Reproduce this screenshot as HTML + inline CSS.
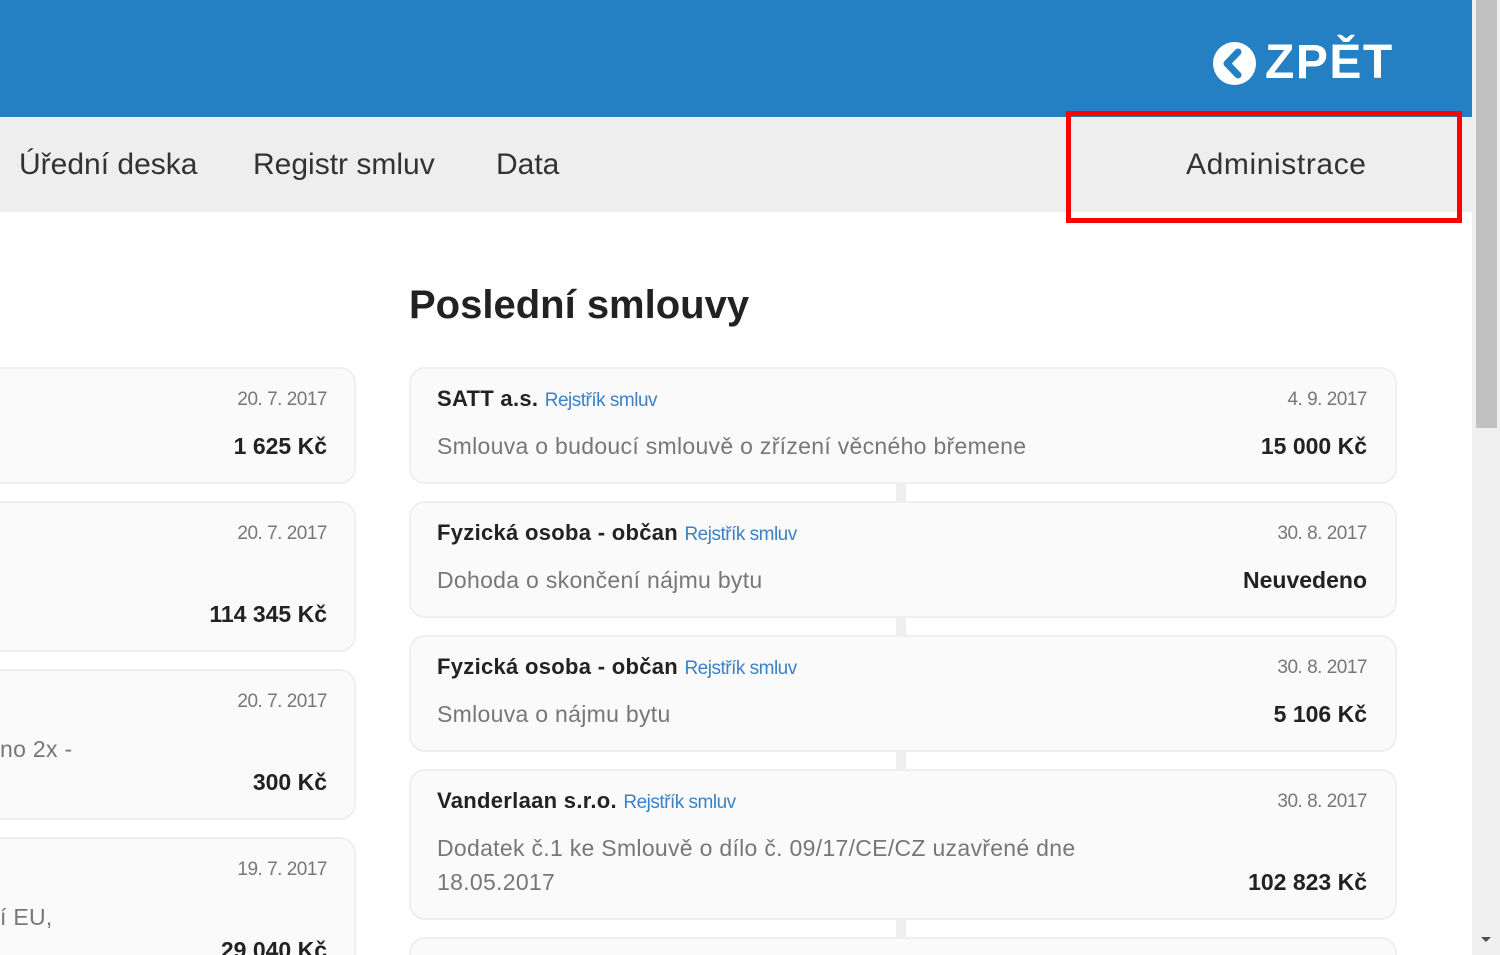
<!DOCTYPE html>
<html style="width:1500px;height:955px;overflow:hidden"><head><meta charset="utf-8"><style>
*{margin:0;padding:0;box-sizing:border-box}
body{width:1500px;height:955px;overflow:hidden;background:#fff;font-family:"Liberation Sans",sans-serif;position:relative}
.a{position:absolute;white-space:nowrap}
.card{position:absolute;background:#fafafa;border:2px solid #efefef;border-radius:16px}
.conn{position:absolute;left:896px;width:10px;background:#eeeeee}
.t{font-size:22px;color:#222;font-weight:bold;letter-spacing:0.3px}
.l{font-size:19px;color:#3a82c8;font-weight:normal;letter-spacing:-0.5px}
.d{font-size:23px;color:#777;letter-spacing:0.3px}
.dt{font-size:19px;color:#777;letter-spacing:-0.5px}
.m{font-size:23px;color:#222;font-weight:bold}
.r{text-align:right}
.n{font-size:30px;color:#333}
</style></head><body>
<div class="a" style="left:0;top:0;width:1472px;height:117px;background:#2580c3"></div>
<svg class="a" style="left:1212px;top:41px" width="45" height="45" viewBox="0 0 45 45"><circle cx="22.5" cy="22.5" r="21.5" fill="#fff"/><path d="M26 11 L15 22.5 L26 34" stroke="#2580c3" stroke-width="7" fill="none" stroke-linecap="round" stroke-linejoin="round"/></svg>
<div class="a" style="left:1265px;top:35px;font-size:48px;font-weight:bold;color:#fff;letter-spacing:1.5px">ZPĚT</div>
<div class="a" style="left:0;top:117px;width:1472px;height:95px;background:#eeeeee"></div>
<div class="a n" style="left:19px;top:148px">Úřední deska</div>
<div class="a n" style="left:253px;top:148px">Registr smluv</div>
<div class="a n" style="left:496px;top:148px">Data</div>
<div class="a n" style="left:1186px;top:148px;letter-spacing:0.6px">Administrace</div>
<div class="a" style="left:1066px;top:111px;width:396px;height:112px;border:5px solid #f00"></div>
<div class="a" style="left:1472px;top:0;width:28px;height:955px;background:#f0f0f0"></div>
<div class="a" style="left:1476px;top:0;width:21px;height:428px;background:#c1c1c1"></div>
<div class="a" style="left:1481px;top:937px;width:0;height:0;border-left:5px solid transparent;border-right:5px solid transparent;border-top:5px solid #505050"></div>

<div class="a" style="left:409px;top:283px;font-size:40px;font-weight:bold;color:#222">Poslední smlouvy</div>

<!-- left column -->
<div class="card" style="left:-20px;top:367px;width:376px;height:117px"></div>
<div class="a dt r" style="left:100px;width:227px;top:389px">20. 7. 2017</div>
<div class="a m r" style="left:100px;width:227px;top:433px">1 625 Kč</div>
<div class="card" style="left:-20px;top:501px;width:376px;height:151px"></div>
<div class="a dt r" style="left:100px;width:227px;top:523px">20. 7. 2017</div>
<div class="a m r" style="left:100px;width:227px;top:601px">114 345 Kč</div>
<div class="card" style="left:-20px;top:669px;width:376px;height:151px"></div>
<div class="a dt r" style="left:100px;width:227px;top:691px">20. 7. 2017</div>
<div class="a d" style="left:0;top:736px">no 2x -</div>
<div class="a m r" style="left:100px;width:227px;top:769px">300 Kč</div>
<div class="card" style="left:-20px;top:837px;width:376px;height:151px"></div>
<div class="a dt r" style="left:100px;width:227px;top:859px">19. 7. 2017</div>
<div class="a d" style="left:0;top:904px">í EU,</div>
<div class="a m r" style="left:100px;width:227px;top:937px">29 040 Kč</div>

<!-- right column -->
<div class="conn" style="top:480px;height:25px"></div>
<div class="conn" style="top:614px;height:25px"></div>
<div class="conn" style="top:748px;height:25px"></div>
<div class="conn" style="top:916px;height:25px"></div>

<div class="card" style="left:409px;top:367px;width:988px;height:117px"></div>
<div class="a t" style="left:437px;top:386px">SATT a.s. <span class="l">Rejstřík smluv</span></div>
<div class="a dt r" style="left:1100px;width:267px;top:389px">4. 9. 2017</div>
<div class="a d" style="left:437px;top:433px">Smlouva o budoucí smlouvě o zřízení věcného břemene</div>
<div class="a m r" style="left:1100px;width:267px;top:433px">15 000 Kč</div>

<div class="card" style="left:409px;top:501px;width:988px;height:117px"></div>
<div class="a t" style="left:437px;top:520px">Fyzická osoba - občan <span class="l">Rejstřík smluv</span></div>
<div class="a dt r" style="left:1100px;width:267px;top:523px">30. 8. 2017</div>
<div class="a d" style="left:437px;top:567px">Dohoda o skončení nájmu bytu</div>
<div class="a m r" style="left:1100px;width:267px;top:567px">Neuvedeno</div>

<div class="card" style="left:409px;top:635px;width:988px;height:117px"></div>
<div class="a t" style="left:437px;top:654px">Fyzická osoba - občan <span class="l">Rejstřík smluv</span></div>
<div class="a dt r" style="left:1100px;width:267px;top:657px">30. 8. 2017</div>
<div class="a d" style="left:437px;top:701px">Smlouva o nájmu bytu</div>
<div class="a m r" style="left:1100px;width:267px;top:701px">5 106 Kč</div>

<div class="card" style="left:409px;top:769px;width:988px;height:151px"></div>
<div class="a t" style="left:437px;top:788px">Vanderlaan s.r.o. <span class="l">Rejstřík smluv</span></div>
<div class="a dt r" style="left:1100px;width:267px;top:791px">30. 8. 2017</div>
<div class="a d" style="left:437px;top:835px">Dodatek č.1 ke Smlouvě o dílo č. 09/17/CE/CZ uzavřené dne</div>
<div class="a d" style="left:437px;top:869px">18.05.2017</div>
<div class="a m r" style="left:1100px;width:267px;top:869px">102 823 Kč</div>

<div class="card" style="left:409px;top:937px;width:988px;height:18px;border-bottom:none;border-radius:16px 16px 0 0"></div>
</body></html>
